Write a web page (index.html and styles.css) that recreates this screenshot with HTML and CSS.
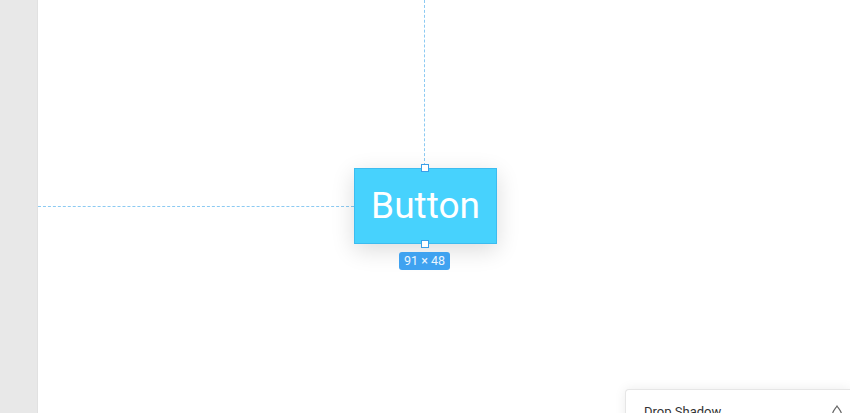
FILE: index.html
```html
<!DOCTYPE html>
<html lang="en">
<head>
    <meta charset="UTF-8">
    <meta name="viewport" content="width=device-width, initial-scale=1.0">
    <title>Canvas</title>
    <link rel="stylesheet" href="styles.css">
</head>
<body>
  <div class="app">
    <div class="sidebar"></div>

    <div class="canvas">
      <!-- guides from the selected layer to the canvas edges -->
      <div class="guide guide-v"></div>
      <div class="guide guide-h"></div>

      <div class="layer">
        <div class="button-el">Button</div>
        <span class="handle handle-top"></span>
        <span class="handle handle-bottom"></span>
        <span class="size-tag">91 &times; 48</span>
      </div>

      <div class="panel">
        <div class="panel-head">
          <span class="panel-title">Drop Shadow</span>
          <svg class="panel-icon" width="12" height="14" viewBox="0 0 12 14">
            <path d="M6 1 C4 4 1.5 6.5 1.5 9.2 A4.5 4.5 0 0 0 10.5 9.2 C10.5 6.5 8 4 6 1 Z" fill="none" stroke="#666" stroke-width="1.2"/>
          </svg>
        </div>
      </div>
    </div>
  </div>
</body>
</html>
```

FILE: styles.css
```css
* {
    box-sizing: border-box;
}

body {
    margin: 0;
    font-family: Roboto, "Liberation Sans", sans-serif;
    background-color: #fff;
    overflow: hidden;
}

.app {
    display: flex;
    width: 850px;
    height: 413px;
    overflow: hidden;
}

.sidebar {
    width: 38px;
    background-color: #e8e8e8;
    border-right: 1px solid #e1e1e1;
}

.canvas {
    position: relative;
    flex: 1;
    background-color: #fff;
    overflow: hidden;
}

.guide {
    position: absolute;
    border-color: #8ccaf2;
    border-style: dashed;
    border-width: 0;
}

.guide-v {
    left: 386px;
    top: 0;
    height: 166px;
    border-left-width: 1px;
}

.guide-h {
    left: 0;
    top: 206px;
    width: 316px;
    border-top-width: 1px;
}

.layer {
    position: absolute;
    left: 316px;
    top: 168px;
    width: 143px;
    height: 76px;
}

.button-el {
    display: flex;
    align-items: center;
    justify-content: center;
    width: 100%;
    height: 100%;
    padding-bottom: 2px;
    background-color: #47d2fd;
    border: 1px solid #3cbcf0;
    color: #fff;
    font-size: 37px;
    box-shadow: 0 6px 22px rgba(0, 0, 0, 0.14);
}

.handle {
    position: absolute;
    left: 67px;
    width: 8px;
    height: 8px;
    background: #fff;
    border: 1px solid #3a9fe8;
}

.handle-top {
    top: -4px;
}

.handle-bottom {
    bottom: -4px;
}

.size-tag {
    position: absolute;
    left: 45px;
    top: 84px;
    padding: 2px 5px;
    border-radius: 3px;
    background-color: #3fa2f0;
    color: #eaf5ff;
    font-size: 12.5px;
    line-height: 14px;
    white-space: nowrap;
}

.panel {
    position: absolute;
    left: 587px;
    top: 389px;
    width: 225px;
    height: 40px;
    background: #fff;
    border: 1px solid #e6e6e6;
    border-right: none;
    border-radius: 4px 0 0 0;
    box-shadow: 0 0 12px rgba(0, 0, 0, 0.08);
}

.panel-head {
    display: flex;
    justify-content: space-between;
    align-items: center;
    padding: 14px 7px 0 18px;
}

.panel-title {
    font-size: 13px;
    color: #333;
}

.panel-icon {
    display: block;
}
```
